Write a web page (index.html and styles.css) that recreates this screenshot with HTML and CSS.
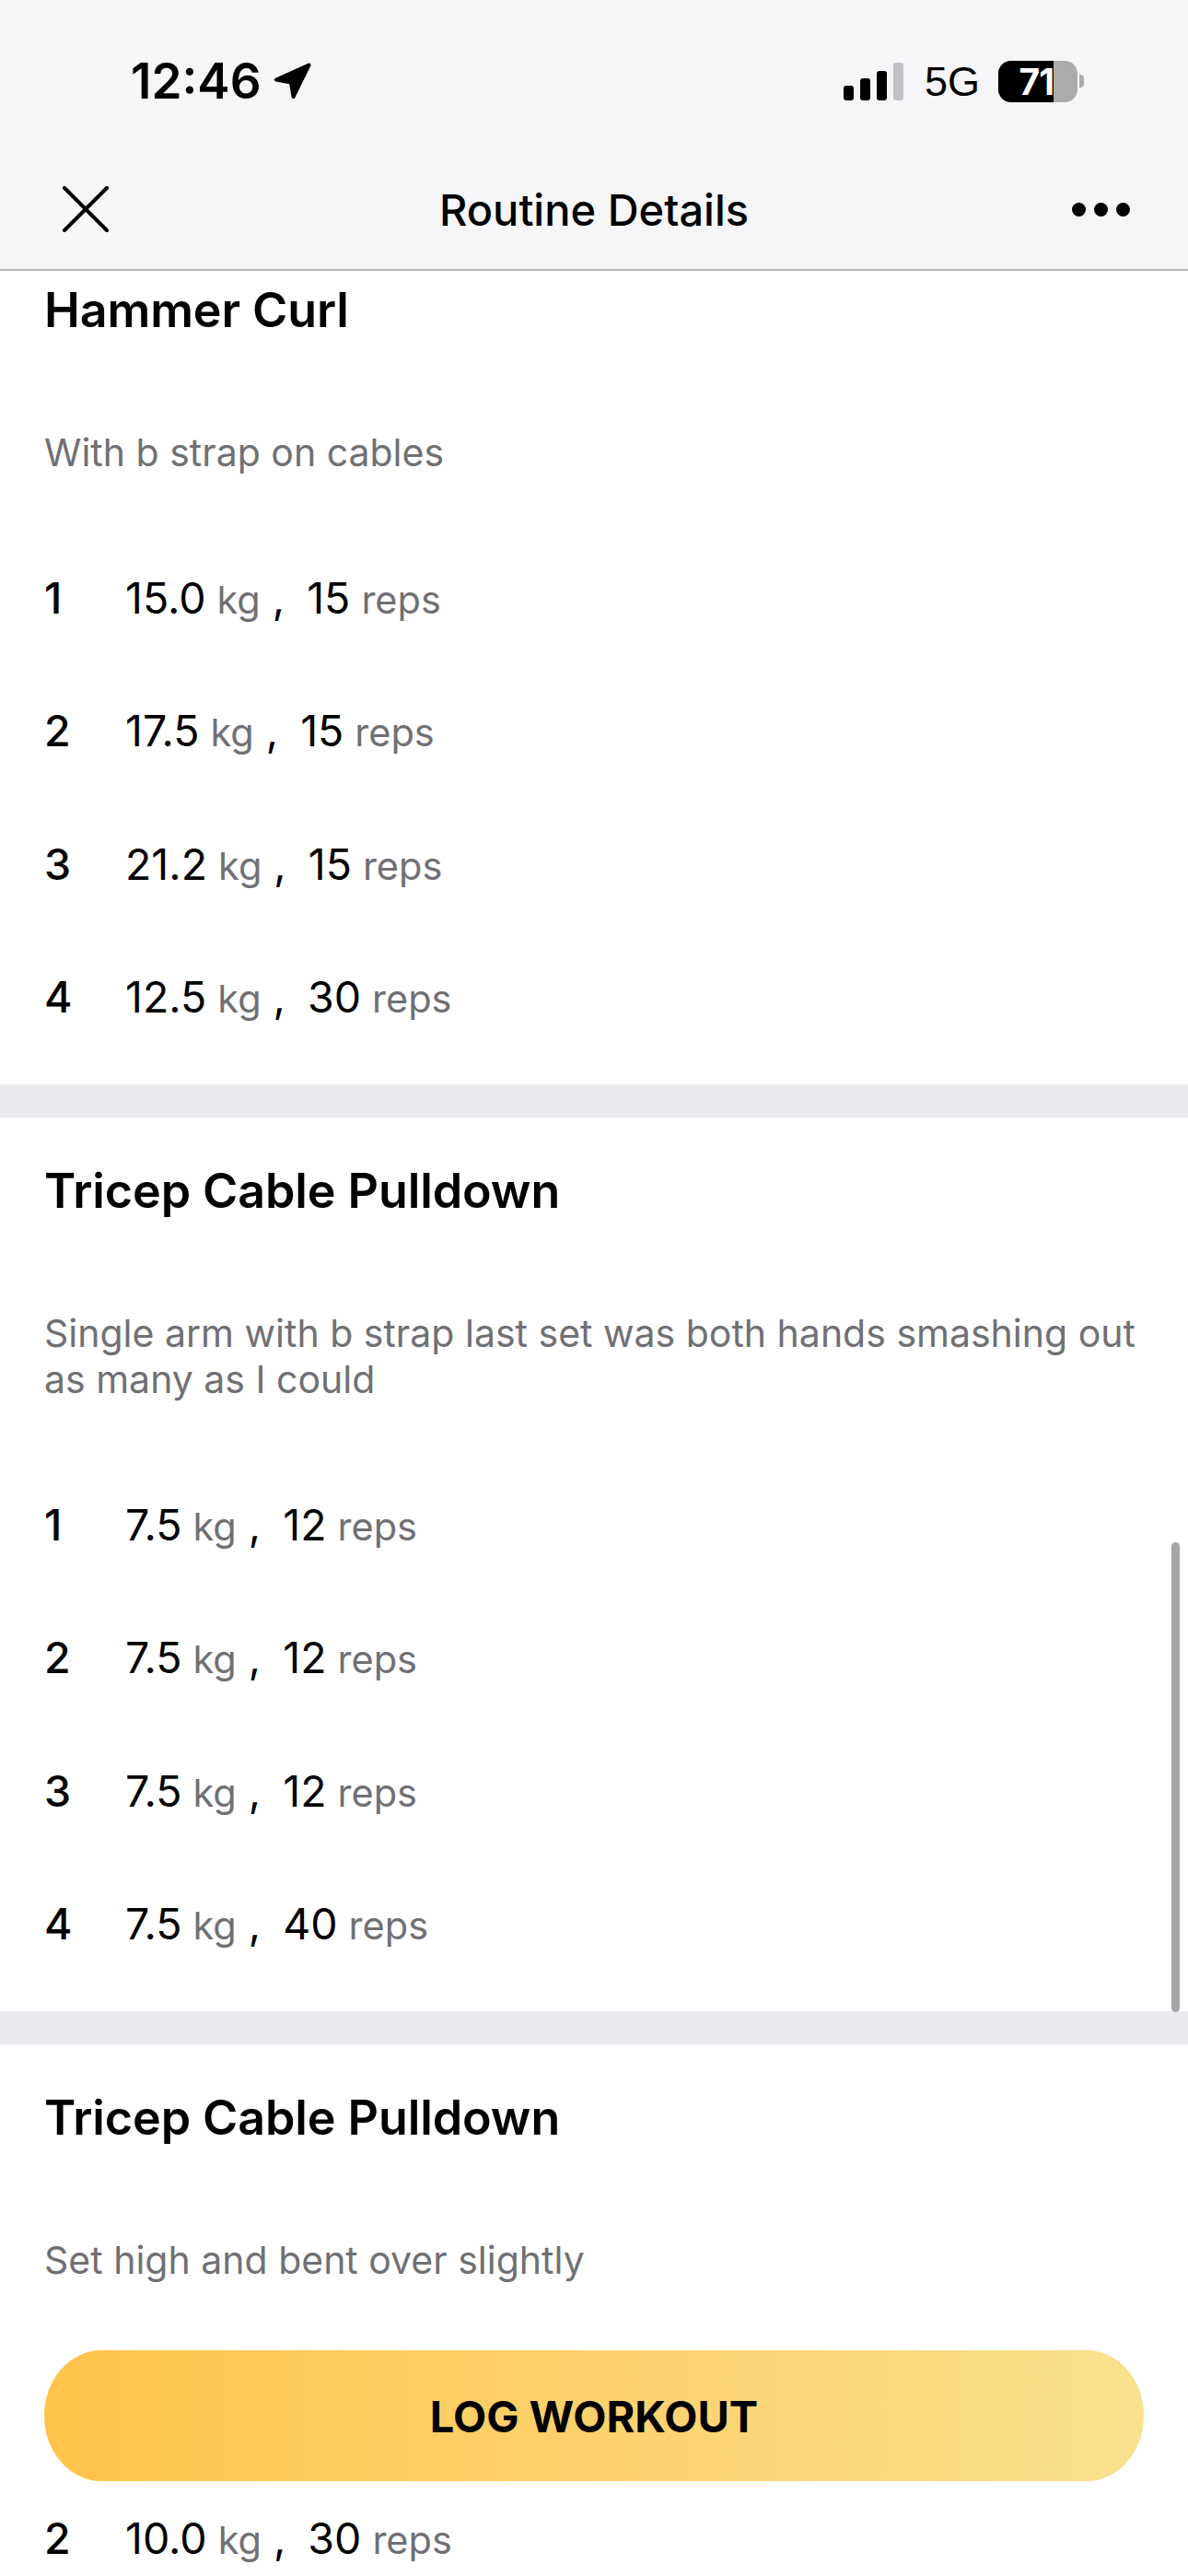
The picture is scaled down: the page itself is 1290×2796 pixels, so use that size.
FILE: index.html
```html
<!DOCTYPE html>
<html lang="en">
<head>
    <meta charset="UTF-8">
    <meta name="viewport" content="width=device-width, initial-scale=1.0">
    <title>Routine Details</title>
    <link rel="stylesheet" href="styles.css">
</head>
<body>
    <div class="phone">
        <header class="top-bar">
            <div class="status-bar">
                <span class="clock">12:46</span>
                <svg class="location-arrow" width="41" height="40" viewBox="0 0 41 40">
                    <path d="M3 18.500 L38.500 2.500 L21.500 37 L19 21.500 Z" fill="#000" stroke="#000" stroke-width="4" stroke-linejoin="round"/>
                </svg>
                <div class="status-right">
                    <div class="signal">
                        <span class="bar bar-1"></span>
                        <span class="bar bar-2"></span>
                        <span class="bar bar-3"></span>
                        <span class="bar bar-4"></span>
                    </div>
                    <span class="network">5G</span>
                    <div class="battery">
                        <div class="battery-body">
                            <div class="battery-fill">71</div>
                        </div>
                        <span class="battery-nub"></span>
                    </div>
                </div>
            </div>
            <nav class="nav-bar">
                <svg class="close-icon" width="50" height="50" viewBox="0 0 50 50">
                    <path d="M2 2 L48 48 M48 2 L2 48" stroke="#000" stroke-width="4" stroke-linecap="round"/>
                </svg>
                <h1>Routine Details</h1>
                <div class="more-icon">
                    <span></span>
                    <span></span>
                    <span></span>
                </div>
            </nav>
        </header>

        <main class="content">
            <div class="scroll-area">
                <section class="exercise">
                    <h2>Hammer Curl</h2>
                    <p class="note">With b strap on cables</p>
                    <ul class="sets">
                        <li><span class="set-no">1</span><span class="num">15.0</span><span class="unit">kg</span><span class="comma">,</span><span class="num">15</span><span class="unit">reps</span></li>
                        <li><span class="set-no">2</span><span class="num">17.5</span><span class="unit">kg</span><span class="comma">,</span><span class="num">15</span><span class="unit">reps</span></li>
                        <li><span class="set-no">3</span><span class="num">21.2</span><span class="unit">kg</span><span class="comma">,</span><span class="num">15</span><span class="unit">reps</span></li>
                        <li><span class="set-no">4</span><span class="num">12.5</span><span class="unit">kg</span><span class="comma">,</span><span class="num">30</span><span class="unit">reps</span></li>
                    </ul>
                </section>
                <section class="exercise">
                    <h2>Tricep Cable Pulldown</h2>
                    <p class="note">Single arm with b strap last set was both hands smashing out as many as I could</p>
                    <ul class="sets">
                        <li><span class="set-no">1</span><span class="num">7.5</span><span class="unit">kg</span><span class="comma">,</span><span class="num">12</span><span class="unit">reps</span></li>
                        <li><span class="set-no">2</span><span class="num">7.5</span><span class="unit">kg</span><span class="comma">,</span><span class="num">12</span><span class="unit">reps</span></li>
                        <li><span class="set-no">3</span><span class="num">7.5</span><span class="unit">kg</span><span class="comma">,</span><span class="num">12</span><span class="unit">reps</span></li>
                        <li><span class="set-no">4</span><span class="num">7.5</span><span class="unit">kg</span><span class="comma">,</span><span class="num">40</span><span class="unit">reps</span></li>
                    </ul>
                </section>
                <section class="exercise">
                    <h2>Tricep Cable Pulldown</h2>
                    <p class="note">Set high and bent over slightly</p>
                    <ul class="sets">
                        <li class="behind-button"><span class="set-no">1</span><span class="num">10.0</span><span class="unit">kg</span><span class="comma">,</span><span class="num">30</span><span class="unit">reps</span></li>
                        <li><span class="set-no">2</span><span class="num">10.0</span><span class="unit">kg</span><span class="comma">,</span><span class="num">30</span><span class="unit">reps</span></li>
                    </ul>
                </section>
            </div>
            <div class="scroll-thumb"></div>
        </main>

        <button class="log-button">LOG WORKOUT</button>
    </div>
</body>
</html>
```

FILE: styles.css
```css
* {
    box-sizing: border-box;
}
html, body {
    margin: 0;
    padding: 0;
}
body {
    font-family: Inter, "Liberation Sans", sans-serif;
    color: #000;
    background-color: #fff;
}
.phone {
    position: relative;
    width: 1290px;
    height: 2796px;
    display: flex;
    flex-direction: column;
    overflow: hidden;
}

/* header */
.top-bar {
    background-color: #f6f6f9;
    border-bottom: 2px solid #b5b5b5;
    height: 294px;
    flex-shrink: 0;
}
.status-bar {
    display: flex;
    align-items: center;
    height: 176px;
    padding: 0 113px 0 142px;
}
.clock {
    font-size: 53px;
    font-weight: 600;
    line-height: 1;
}
.location-arrow {
    margin-left: 13px;
}
.status-right {
    display: flex;
    align-items: center;
    margin-left: auto;
}
.signal {
    display: flex;
    align-items: flex-end;
    gap: 7px;
    height: 41px;
}
.bar {
    width: 11px;
    background-color: #000;
    border-radius: 3px;
}
.bar-1 { height: 16px; }
.bar-2 { height: 24px; }
.bar-3 { height: 32px; }
.bar-4 { height: 41px; background-color: #c3c3c7; }
.network {
    font-family: "Liberation Sans", sans-serif;
    font-size: 45px;
    line-height: 1;
    margin: 0 20px 0 23px;
}
.battery {
    display: flex;
    align-items: center;
    gap: 2px;
}
.battery-body {
    width: 86px;
    height: 45px;
    border-radius: 14px;
    background-color: #ababab;
    overflow: hidden;
}
.battery-fill {
    width: 60px;
    height: 45px;
    background-color: #000;
    color: #fff;
    font-size: 39px;
    font-weight: 700;
    line-height: 45px;
    text-align: right;
    letter-spacing: -1px;
    white-space: nowrap;
    overflow: hidden;
}
.battery-nub {
    width: 5px;
    height: 14px;
    background-color: #ababab;
    border-radius: 0 4px 4px 0;
}
.nav-bar {
    display: flex;
    align-items: center;
    justify-content: space-between;
    height: 102px;
    padding: 0 63px 0 68px;
}
.close-icon {
    margin-right: 8px;
}
.nav-bar h1 {
    margin: 0;
    font-size: 47px;
    font-weight: 500;
    line-height: 1;
}
.more-icon {
    display: flex;
    gap: 9px;
}
.more-icon span {
    width: 15px;
    height: 15px;
    border-radius: 50%;
    background-color: #000;
}

/* exercises */
.content {
    position: relative;
    flex: 1;
    overflow: hidden;
}
.scroll-area {
    margin-top: -37px;
}
.exercise {
    padding: 50px 48px 23px;
    border-bottom: 36px solid #e9e9ee;
}
.exercise:last-child {
    border-bottom: none;
}
.exercise h2 {
    margin: 0;
    font-size: 52px;
    font-weight: 600;
    letter-spacing: -0.100px;
    line-height: 60px;
}
.note {
    margin: 99px 0 0;
    font-size: 41px;
    line-height: 50px;
    color: #707074;
}
.sets {
    list-style: none;
    margin: 61px 0 0;
    padding: 0;
}
.sets li {
    display: flex;
    align-items: baseline;
    height: 144.250px;
    line-height: 144.250px;
    font-size: 46.500px;
}
.sets .behind-button {
    visibility: hidden;
}
.set-no {
    width: 88px;
    font-weight: 500;
}
.unit {
    font-size: 41.500px;
    color: #707074;
    margin-left: 12px;
}
.comma {
    margin: 0 24px 0 13px;
}

/* overlays */
.scroll-thumb {
    position: absolute;
    top: 1380px;
    right: 9px;
    width: 9px;
    height: 510px;
    border-radius: 5px;
    background-color: #a5a5a5;
}
.log-button {
    position: absolute;
    left: 48px;
    top: 2551px;
    width: 1194px;
    height: 142px;
    border: none;
    border-radius: 62px / 71px;
    background: linear-gradient(90deg, #ffc34b, #f9e18f);
    color: #000;
    font-family: Inter, "Liberation Sans", sans-serif;
    font-size: 47px;
    font-weight: 700;
    padding: 0;
}
```
